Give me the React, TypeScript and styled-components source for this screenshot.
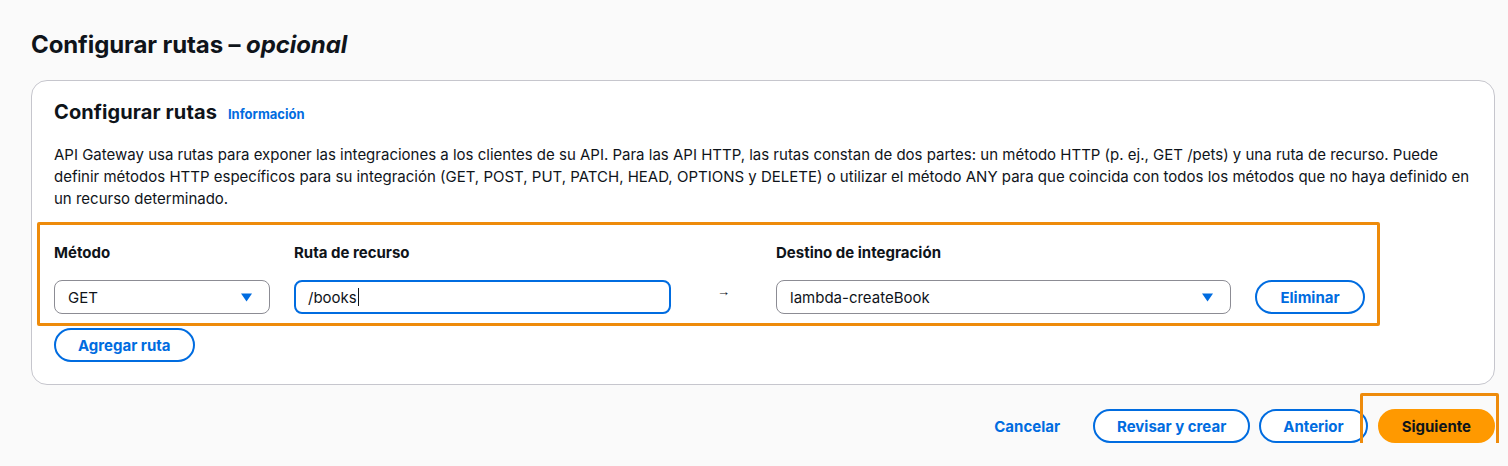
import React from "react";
import styled, { createGlobalStyle } from "styled-components";

const GlobalStyle = createGlobalStyle`
  html, body { margin: 0; padding: 0; background: #fafafa; }
  body { font-family: Inter, "Open Sans", sans-serif; color: #0f141a; }
  * { box-sizing: border-box; }
`;

const Page = styled.div`
  padding: 30px 14px 0 31px;
  width: 1508px;
`;

const Title = styled.h1`
  margin: 0;
  font-size: 24px;
  line-height: 30px;
  font-weight: 700;
  letter-spacing: -0.1px;
  em { font-style: italic; font-weight: 700; }
`;

const Card = styled.section`
  margin-top: 20px;
  width: 1464px;
  background: #ffffff;
  border: 1px solid #c6c6cd;
  border-radius: 16px;
  padding: 19px 23px 22px 22px;
`;

const HeadingRow = styled.div`
  display: flex;
  align-items: baseline;
  gap: 11px;
`;

const CardTitle = styled.h2`
  margin: 0;
  font-size: 20px;
  line-height: 24px;
  font-weight: 700;
  letter-spacing: 0.1px;
`;

const InfoLink = styled.a`
  font-size: 13px;
  font-weight: 700;
  color: #006ce0;
  text-decoration: none;
`;

const Description = styled.p`
  margin: 20px 0 0;
  font-size: 15px;
  line-height: 22px;
`;

const EditorWrap = styled.div`
  position: relative;
  margin-top: 33px;
  width: 1312px;
`;

const Highlight = styled.div<{ $l: number; $r: number; $t: number; $b: number }>`
  position: absolute;
  left: ${(p) => p.$l}px;
  right: ${(p) => p.$r}px;
  top: ${(p) => p.$t}px;
  bottom: ${(p) => p.$b}px;
  border: 3px solid #ee8b0b;
  border-radius: 2px;
  pointer-events: none;
`;

const EditorGrid = styled.div`
  display: grid;
  grid-template-columns: 216px 377px 57px 455px 110px;
  column-gap: 24px;
  row-gap: 17px;
  align-items: center;
`;

const Label = styled.div`
  font-size: 15px;
  line-height: 20px;
  font-weight: 700;
`;

const SelectBox = styled.div`
  height: 34px;
  border: 1px solid #8c8c94;
  border-radius: 8px;
  background: #fff;
  display: flex;
  align-items: center;
  justify-content: space-between;
  padding: 0 17px 0 13px;
  font-size: 15px;
`;

const InputBox = styled.div`
  height: 34px;
  border: 2px solid #006ce0;
  border-radius: 8px;
  background: #fff;
  display: flex;
  align-items: center;
  padding: 0 12px;
  font-size: 15px;
`;

const Caret = styled.span`
  display: inline-block;
  width: 1px;
  height: 18px;
  background: #0f141a;
  margin-left: 1px;
`;

const Arrow = styled.div`
  text-align: center;
  font-family: "Liberation Sans", Arial, sans-serif;
  font-size: 13px;
  line-height: 12px;
  color: #0f141a;
  margin-bottom: 10px;
`;

const Button = styled.button<{ $variant?: "normal" | "primary" | "link" }>`
  height: 34px;
  border-radius: 20px;
  font-family: inherit;
  font-size: 15px;
  font-weight: 700;
  padding: 0 22px;
  cursor: pointer;
  white-space: nowrap;
  border: 2px solid
    ${(p) => (p.$variant === "primary" ? "#ff9900" : p.$variant === "link" ? "transparent" : "#006ce0")};
  background: ${(p) => (p.$variant === "primary" ? "#ff9900" : p.$variant === "link" ? "transparent" : "#fff")};
  color: ${(p) => (p.$variant === "primary" ? "#0f141a" : "#006ce0")};
`;

const AddButton = styled(Button)`
  margin-top: 14px;
`;

const Footer = styled.div`
  margin-top: 24px;
  width: 1464px;
  display: flex;
  justify-content: flex-end;
  align-items: center;
  gap: 9px;
`;

const Annotated = styled.div`
  position: relative;
  display: flex;
  margin-left: 1px;
`;

const DropIcon = () => (
  <svg width="11" height="9" viewBox="0 0 11 9">
    <polygon points="0,0.5 11,0.5 5.5,8.5" fill="#006ce0" />
  </svg>
);

export default function App() {
  return (
    <>
      <GlobalStyle />
      <Page>
        <Title>
          Configurar rutas – <em>opcional</em>
        </Title>
        <Card>
          <HeadingRow>
            <CardTitle>Configurar rutas</CardTitle>
            <InfoLink href="#">Información</InfoLink>
          </HeadingRow>
          <Description>
            API Gateway usa rutas para exponer las integraciones a los clientes de su API. Para las API HTTP, las
            rutas constan de dos partes: un método HTTP (p. ej., GET /pets) y una ruta de recurso. Puede definir
            métodos HTTP específicos para su integración (GET, POST, PUT, PATCH, HEAD, OPTIONS y DELETE) o utilizar
            el método ANY para que coincida con todos los métodos que no haya definido en un recurso determinado.
          </Description>
          <EditorWrap>
            <Highlight $l={-17} $r={-14} $t={-21} $b={-12} />
            <EditorGrid>
              <Label>Método</Label>
              <Label>Ruta de recurso</Label>
              <div />
              <Label>Destino de integración</Label>
              <div />
              <SelectBox>
                <span>GET</span>
                <DropIcon />
              </SelectBox>
              <InputBox>
                /books
                <Caret />
              </InputBox>
              <Arrow>→</Arrow>
              <SelectBox>
                <span>lambda-createBook</span>
                <DropIcon />
              </SelectBox>
              <Button>Eliminar</Button>
            </EditorGrid>
          </EditorWrap>
          <AddButton>Agregar ruta</AddButton>
        </Card>
        <Footer>
          <Button $variant="link">Cancelar</Button>
          <Button>Revisar y crear</Button>
          <Button>Anterior</Button>
          <Annotated>
            <Highlight $l={-18} $r={-4} $t={-16} $b={-15} />
            <Button $variant="primary">Siguiente</Button>
          </Annotated>
        </Footer>
      </Page>
    </>
  );
}
